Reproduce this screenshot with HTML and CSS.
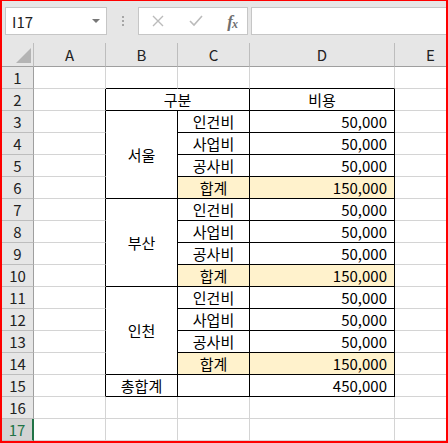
FILE: index.html
```html
<!DOCTYPE html>
<html lang="ko">
<head>
  <meta charset="UTF-8">
  <title>비용 집계</title>
  <link rel="stylesheet" href="styles.css">
</head>
<body>
  <div class="excel">
    <div class="formula-bar">
      <div class="name-box">
        <span>I17</span>
        <svg class="caret" width="8" height="5" viewBox="0 0 8 5"><path d="M0 0h8L4 4z" fill="#777"/></svg>
      </div>
      <div class="grip"><i></i><i></i><i></i></div>
      <div class="fx-box">
        <svg width="12" height="12" viewBox="0 0 12 12"><path d="M1 1l10 10M11 1L1 11" stroke="#bbb" stroke-width="1.4"/></svg>
        <svg width="14" height="12" viewBox="0 0 14 12"><path d="M1 6l4 4 8-9" stroke="#bbb" stroke-width="1.6" fill="none"/></svg>
        <span class="fx">f<sub>x</sub></span>
      </div>
      <div class="formula-input"></div>
    </div>

    <div class="sheet">
      <!-- header -->
      <div class="corner"><svg width="15" height="15" viewBox="0 0 15 15"><path d="M15 0V15H0z" fill="#b4b4b4"/></svg></div>
      <div class="col-head">A</div>
      <div class="col-head">B</div>
      <div class="col-head">C</div>
      <div class="col-head">D</div>
      <div class="col-head">E</div>

      <!-- 1 -->
      <div class="row-head">1</div>
      <div class="cell"></div>
      <div class="cell kb"></div>
      <div class="cell kb"></div>
      <div class="cell kb"></div>
      <div class="cell"></div>

      <!-- 2 -->
      <div class="row-head">2</div>
      <div class="cell kr"></div>
      <div class="cell t kr kb center span-c">구분</div>
      <div class="cell t kr kb center">비용</div>
      <div class="cell"></div>

      <!-- 3-6 서울 -->
      <div class="row-head">3</div>
      <div class="cell kr"></div>
      <div class="cell t kr kb center mid span-r">서울</div>
      <div class="cell t kr kb center">인건비</div>
      <div class="cell t kr kb num">50,000</div>
      <div class="cell"></div>

      <div class="row-head">4</div>
      <div class="cell kr"></div>
      <div class="cell t kr kb center">사업비</div>
      <div class="cell t kr kb num">50,000</div>
      <div class="cell"></div>

      <div class="row-head">5</div>
      <div class="cell kr"></div>
      <div class="cell t kr kb center">공사비</div>
      <div class="cell t kr kb num">50,000</div>
      <div class="cell"></div>

      <div class="row-head">6</div>
      <div class="cell kr"></div>
      <div class="cell t kr kb center sum">합계</div>
      <div class="cell t kr kb num sum">150,000</div>
      <div class="cell"></div>

      <!-- 7-10 부산 -->
      <div class="row-head">7</div>
      <div class="cell kr"></div>
      <div class="cell t kr kb center mid span-r">부산</div>
      <div class="cell t kr kb center">인건비</div>
      <div class="cell t kr kb num">50,000</div>
      <div class="cell"></div>

      <div class="row-head">8</div>
      <div class="cell kr"></div>
      <div class="cell t kr kb center">사업비</div>
      <div class="cell t kr kb num">50,000</div>
      <div class="cell"></div>

      <div class="row-head">9</div>
      <div class="cell kr"></div>
      <div class="cell t kr kb center">공사비</div>
      <div class="cell t kr kb num">50,000</div>
      <div class="cell"></div>

      <div class="row-head">10</div>
      <div class="cell kr"></div>
      <div class="cell t kr kb center sum">합계</div>
      <div class="cell t kr kb num sum">150,000</div>
      <div class="cell"></div>

      <!-- 11-14 인천 -->
      <div class="row-head">11</div>
      <div class="cell kr"></div>
      <div class="cell t kr kb center mid span-r">인천</div>
      <div class="cell t kr kb center">인건비</div>
      <div class="cell t kr kb num">50,000</div>
      <div class="cell"></div>

      <div class="row-head">12</div>
      <div class="cell kr"></div>
      <div class="cell t kr kb center">사업비</div>
      <div class="cell t kr kb num">50,000</div>
      <div class="cell"></div>

      <div class="row-head">13</div>
      <div class="cell kr"></div>
      <div class="cell t kr kb center">공사비</div>
      <div class="cell t kr kb num">50,000</div>
      <div class="cell"></div>

      <div class="row-head">14</div>
      <div class="cell kr"></div>
      <div class="cell t kr kb center sum">합계</div>
      <div class="cell t kr kb num sum">150,000</div>
      <div class="cell"></div>

      <!-- 15 -->
      <div class="row-head">15</div>
      <div class="cell kr"></div>
      <div class="cell t kr kb center">총합계</div>
      <div class="cell t kr kb"></div>
      <div class="cell t kr kb num">450,000</div>
      <div class="cell"></div>

      <!-- 16-17 -->
      <div class="row-head">16</div>
      <div class="cell"></div>
      <div class="cell"></div>
      <div class="cell"></div>
      <div class="cell"></div>
      <div class="cell"></div>

      <div class="row-head active">17</div>
      <div class="cell"></div>
      <div class="cell"></div>
      <div class="cell"></div>
      <div class="cell"></div>
      <div class="cell"></div>
    </div>
  </div>
</body>
</html>
```

FILE: styles.css
```css
* {
  margin: 0;
  padding: 0;
  box-sizing: border-box;
}

body {
  background: #fff;
  font-family: "Noto Sans CJK KR", "Noto Sans", sans-serif;
  font-size: 15px;
  color: #000;
}

.excel {
  width: 448px;
  height: 443px;
  border: 2px solid #f00;
  border-top-width: 1px;
  overflow: hidden;
  background: #e6e6e6;
}

/* formula bar */
.formula-bar {
  height: 42px;
  display: flex;
  align-items: flex-start;
  padding: 6px 0 0 3px;
}

.name-box {
  width: 102px;
  height: 28px;
  background: #fff;
  border: 1px solid #c6c6c6;
  display: flex;
  align-items: center;
  justify-content: space-between;
  padding: 0 6px 0 6px;
  font-size: 15px;
  color: #222;
}

.grip {
  width: 31px;
  height: 28px;
  display: flex;
  flex-direction: column;
  align-items: center;
  justify-content: center;
  gap: 2px;
}

.grip i {
  width: 2px;
  height: 2px;
  background: #a6a6a6;
}

.fx-box {
  width: 110px;
  height: 28px;
  background: #fff;
  border: 1px solid #c6c6c6;
  display: flex;
  align-items: center;
  padding: 0 10px 0 13px;
  justify-content: space-between;
}

.fx {
  font-family: "Liberation Serif", serif;
  font-style: italic;
  font-weight: bold;
  font-size: 17px;
  color: #6f6f6f;
  letter-spacing: -1px;
  line-height: 1;
}

.fx sub {
  font-size: 12px;
  vertical-align: -1px;
}

.formula-input {
  flex: 1;
  height: 28px;
  margin-left: 3px;
  background: #fff;
  border: 1px solid #c6c6c6;
  border-right: none;
}

/* sheet */
.sheet {
  display: grid;
  grid-template-columns: 32px 72px 72px 72px 145px 72px;
  grid-template-rows: 24px repeat(17, 22px);
  background: #fff;
}

.corner {
  background: #e6e6e6;
  border-right: 1px solid #bdbdbd;
  border-bottom: 1px solid #9f9f9f;
  display: flex;
  align-items: flex-end;
  justify-content: flex-end;
  padding: 0 2px 3px 0;
}

.col-head {
  background: #e6e6e6;
  border-right: 1px solid #bdbdbd;
  border-bottom: 1px solid #9f9f9f;
  text-align: center;
  line-height: 23px;
  font-size: 15px;
  color: #222;
}

.row-head {
  background: #e6e6e6;
  border-right: 1px solid #9f9f9f;
  border-bottom: 1px solid #bdbdbd;
  text-align: center;
  line-height: 21px;
  font-size: 15px;
  color: #222;
}

.row-head.active {
  background: #d3d3d3;
  color: #217346;
  border-right: 2px solid #217346;
}

.cell {
  border-right: 1px solid #d4d4d4;
  border-bottom: 1px solid #d4d4d4;
  line-height: 21px;
  white-space: nowrap;
}

.cell.kr {
  border-right-color: #000;
}

.cell.kb {
  border-bottom-color: #000;
}

.center {
  text-align: center;
}

.num {
  text-align: right;
  padding-right: 7px;
}

.mid {
  display: flex;
  align-items: center;
  justify-content: center;
}

.span-c {
  grid-column: span 2;
}

.span-r {
  grid-row: span 4;
}

.sum {
  background: #fff2cc;
}
```
